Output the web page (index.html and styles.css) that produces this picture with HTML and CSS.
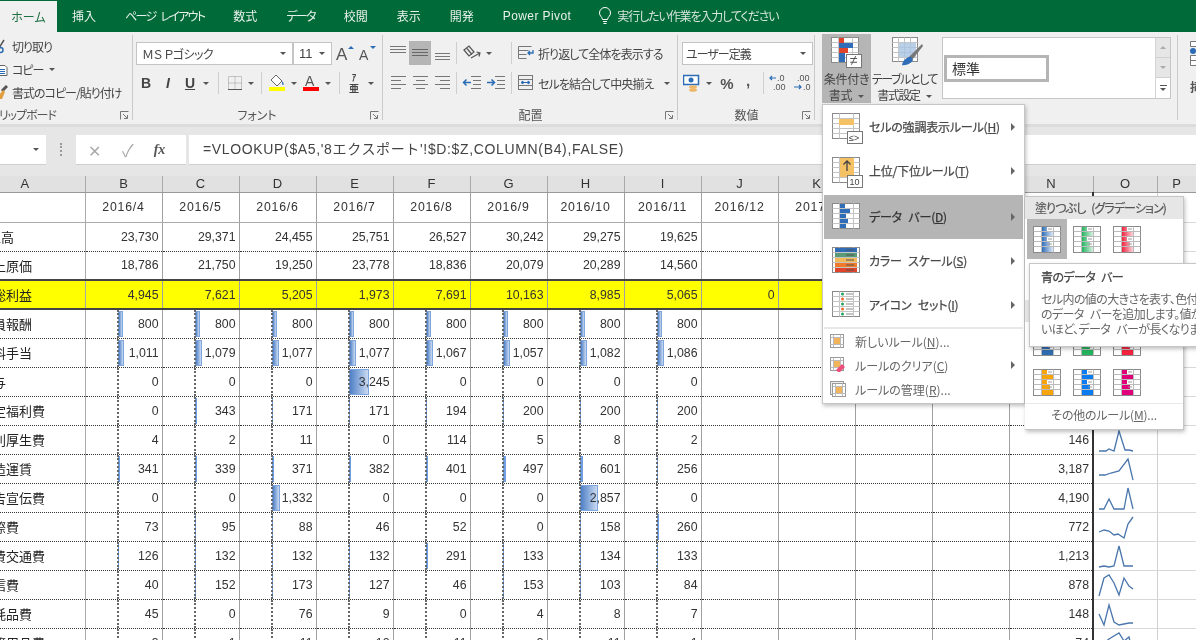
FILE: index.html
```html
<!DOCTYPE html>
<html lang="ja">
<head>
<meta charset="utf-8">
<title>Excel 条件付き書式</title>
<link rel="stylesheet" href="styles.css">
</head>
<body>
<svg class="defs" aria-hidden="true">
  <defs>
    <linearGradient id="gBlue"><stop offset="0" stop-color="#2f6db8"/><stop offset="1" stop-color="#dbe7f6"/></linearGradient>
    <linearGradient id="gGreen"><stop offset="0" stop-color="#22b35e"/><stop offset="1" stop-color="#d6f2e1"/></linearGradient>
    <linearGradient id="gRed"><stop offset="0" stop-color="#f0223e"/><stop offset="1" stop-color="#fcd5da"/></linearGradient>
    <symbol id="al-top" viewBox="0 0 20 20"><path d="M2 3.5h16M2 6.5h16M2 9.5h16" stroke="#777" fill="none"/></symbol>
    <symbol id="al-mid" viewBox="0 0 20 20"><path d="M2 6.5h16M2 9.5h16M2 12.5h16" stroke="#666" fill="none"/></symbol>
    <symbol id="al-bot" viewBox="0 0 20 20"><path d="M3 10.5h15M3 13.5h15M3 16.5h15" stroke="#777" fill="none"/></symbol>
    <symbol id="al-l" viewBox="0 0 20 20"><path d="M3 3.5h15M3 7.5h10M3 11.5h15M3 15.5h10" stroke="#777" fill="none"/></symbol>
    <symbol id="al-c" viewBox="0 0 20 20"><path d="M3 3.5h15M6 7.5h9M3 11.5h15M6 15.5h9" stroke="#777" fill="none"/></symbol>
    <symbol id="al-r" viewBox="0 0 20 20"><path d="M3 3.5h15M8 7.5h10M3 11.5h15M8 15.5h10" stroke="#777" fill="none"/></symbol>
    <symbol id="in-l" viewBox="0 0 20 20"><path d="M9 3.5h10M11 7.5h8M11 11.5h8M9 15.5h10" stroke="#777" fill="none"/><path d="M1 9.5h8M4.500 6.500l-3 3 3 3" stroke="#2b6cb5" stroke-width="1.500" fill="none"/></symbol>
    <symbol id="in-r" viewBox="0 0 20 20"><path d="M9 3.5h10M11 7.500h8M11 11.500h8M9 15.5h10" stroke="#777" fill="none"/><path d="M1 9.500h8M5.500 6.500l3 3-3 3" stroke="#2b6cb5" stroke-width="1.500" fill="none"/></symbol>
    <symbol id="launcher" viewBox="0 0 9 9"><path d="M.5 8.500v-8h8M3 3l4 4M4 7.500h3.500V4" fill="none" stroke="#777"/></symbol>
    <symbol id="grid-sm" viewBox="0 0 14 14"><rect x=".5" y=".5" width="13" height="13" fill="#fff" stroke="#999"/><path d="M.5 3.500h13M.5 10.500h13M3.500 .5v13M10.500 .5v13" stroke="#bbb" fill="none"/><rect x="4" y="4" width="6" height="6" fill="#f2b45a"/></symbol>
    <symbol id="tbl" viewBox="0 0 32 32"><rect x=".5" y=".5" width="27" height="25" fill="#fff" stroke="#8a8a8a"/><path d="M.5 5.500h27M.5 10.500h27M.5 15.500h27M.5 20.500h27M7.500 .5v25M21.500 .5v25" stroke="#c4c4c4" fill="none"/></symbol>
    <symbol id="gal" viewBox="0 0 28 27"><rect x=".5" y=".5" width="27" height="26" fill="#fff" stroke="#8a8a8a"/><path d="M.5 5.500h27M.5 10.500h27M.5 15.500h27M.5 20.500h27M8.500 .5v26M20.500 .5v26" stroke="#bbb" fill="none"/><path d="M9 1h5v4H9zM9 6h11v4H9zM9 11h5v4H9zM9 16h8v4H9zM9 21h11v5H9z" stroke="none"/><path d="M15 3h4M15 13h4M15 18h4" stroke="#999" fill="none"/></symbol>
  </defs>
</svg>
<div class="app">
  <nav class="tabs">
    <span class="tab home">ホーム</span>
    <span class="tab">挿入</span>
    <span class="tab kana">ページ レイアウト</span>
    <span class="tab">数式</span>
    <span class="tab kana">データ</span>
    <span class="tab">校閲</span>
    <span class="tab">表示</span>
    <span class="tab">開発</span>
    <span class="tab latin">Power Pivot</span>
    <span class="tab tell">
      <svg width="14" height="18" viewBox="0 0 14 18"><path d="M4.500 12.500C4 9.500 1.500 9 1.500 6a5.500 5.500 0 0 1 11 0c0 3-2.500 3.500-3 6.500zM5 14.500h4M5.500 16.500h3" fill="none" stroke="#fff"/></svg>
      <span>実行したい作業を入力してください</span>
    </span>
  </nav>

  <section class="ribbon">
    <div class="group clip">
      <div class="clip-list">
        <div class="clip-row">
          <svg class="clip-ic" width="12" height="16" viewBox="0 0 12 16"><path d="M8 1 3 9M0 3l5 6" stroke="#555" stroke-width="1.500" fill="none"/><circle cx="4.500" cy="11" r="2.500" fill="none" stroke="#2b6cb5" stroke-width="1.500"/></svg>
          <span>切り取り</span>
        </div>
        <div class="clip-row">
          <svg class="clip-ic" width="12" height="16" viewBox="0 0 12 16"><path d="M1 3.500h8l2 2v8H1z" fill="#fff" stroke="#666"/><path d="M3 7.500h6M3 9.500h6M3 11.500h6" stroke="#2b6cb5"/></svg>
          <span>コピー</span><i class="caret gapped"></i>
        </div>
        <div class="clip-row">
          <svg class="clip-ic" width="12" height="16" viewBox="0 0 12 16"><path d="M11 1 6 6" stroke="#555" stroke-width="3"/><path d="M0 14 7 5l2 2-3 7z" fill="#e0a040"/></svg>
          <span>書式のコピー/貼り付け</span>
        </div>
      </div>
      <div class="label label-clip"><span>クリップボード</span><svg class="launch" width="9" height="9"><use href="#launcher"/></svg></div>
    </div>

    <div class="group font">
      <div class="rows">
        <div class="row font-r1">
          <span class="select sel-font"><span>ＭＳ Ｐゴシック</span><i class="caret"></i></span>
          <span class="select sel-size"><span>11</span><i class="caret"></i></span>
          <svg class="ic" width="22" height="22" viewBox="0 0 22 22"><text x="3" y="18" class="glyph big">A</text><path d="M15 7l3-3 3 3z" fill="#2b6cb5"/></svg>
          <svg class="ic" width="22" height="22" viewBox="0 0 22 22"><text x="4" y="18" class="glyph mid">A</text><path d="M15 4l3 3 3-3z" fill="#2b6cb5"/></svg>
        </div>
        <div class="row font-r2">
          <b class="btn-txt">B</b>
          <em class="btn-txt">I</em>
          <u class="btn-txt">U</u>
          <i class="caret"></i>
          <span class="sep"></span>
          <svg class="ic" width="20" height="20" viewBox="0 0 20 20"><path d="M3.500 3.500h13v13h-13zM10 3.500v13M3.500 10h13" fill="none" stroke="#999" stroke-dasharray="1 1"/><path d="M3 16.500h14" stroke="#555"/></svg>
          <i class="caret"></i>
          <span class="sep"></span>
          <svg class="ic" width="20" height="22" viewBox="0 0 20 22"><path d="M9 3l6 6-5 5-6-6z" fill="#fff" stroke="#666"/><path d="M15 9c2 2 2 4 1 4s-1-2-1-4z" fill="#2b6cb5"/><path d="M2 17h16" stroke="#ff0" stroke-width="4"/></svg>
          <i class="caret"></i>
          <svg class="ic" width="20" height="22" viewBox="0 0 20 22"><text x="4" y="14" class="glyph mid">A</text><path d="M2 17h16" stroke="#f00" stroke-width="4"/></svg>
          <i class="caret"></i>
          <span class="sep"></span>
          <span class="furi"><small>ｱ</small>亜</span>
          <i class="caret"></i>
        </div>
      </div>
      <div class="label"><span></span><span>フォント</span><svg class="launch" width="9" height="9"><use href="#launcher"/></svg></div>
    </div>

    <div class="group align">
      <div class="rows">
        <div class="row al-r1">
          <svg class="ic" width="20" height="20"><use href="#al-top"/></svg>
          <span class="ic-on"><svg width="20" height="20"><use href="#al-mid"/></svg></span>
          <svg class="ic" width="20" height="20"><use href="#al-bot"/></svg>
          <span class="sep"></span>
          <svg class="ic" width="20" height="20" viewBox="0 0 20 20"><path d="M2 7l5-4 5 6-5 4zM5 5.500l5 6" stroke="#555" stroke-width="1.200" fill="none"/><path d="M9 15l9-5M14.500 9l3.500 1-1 3.500" stroke="#555" stroke-width="1.200" fill="none"/></svg>
          <i class="caret"></i>
          <span class="sep sep-end"></span>
          <span class="wide"><svg width="16" height="18" viewBox="0 0 16 18"><path d="M.5 2.500h13M.5 6.500h10M.5 10.500h8M.5 14.500h8" stroke="#777" fill="none"/><path d="M.5 2.500v12" stroke="#777"/><path d="M15 6v3h-5M12 7l-2 2 2 2" stroke="#2b6cb5" stroke-width="1.300" fill="none"/></svg><span>折り返して全体を表示する</span></span>
        </div>
        <div class="row al-r2">
          <svg class="ic" width="20" height="20"><use href="#al-l"/></svg>
          <svg class="ic" width="20" height="20"><use href="#al-c"/></svg>
          <svg class="ic" width="20" height="20"><use href="#al-r"/></svg>
          <span class="sep"></span>
          <svg class="ic" width="20" height="20"><use href="#in-l"/></svg>
          <svg class="ic" width="20" height="20"><use href="#in-r"/></svg>
          <span class="sep sep-end"></span>
          <span class="wide"><svg width="16" height="18" viewBox="0 0 16 18"><rect x=".5" y="1.500" width="14" height="14" fill="none" stroke="#777"/><path d="M.5 5.500h14M.5 11.500h14" stroke="#777"/><path d="M3 8.500h9M3 8.500l2-1.500v3zM12 8.500l-2-1.500v3z" stroke="#2b6cb5" fill="#2b6cb5"/></svg><span>セルを結合して中央揃え</span><i class="caret gapped"></i></span>
        </div>
      </div>
      <div class="label"><span></span><span>配置</span><svg class="launch" width="9" height="9"><use href="#launcher"/></svg></div>
    </div>

    <div class="group number">
      <div class="rows">
        <div class="row num-r1"><span class="select sel-num"><span>ユーザー定義</span><i class="caret"></i></span></div>
        <div class="row num-r2">
          <svg class="ic" width="18" height="20" viewBox="0 0 18 20"><rect x=".5" y="2.500" width="15" height="9" fill="#fff" stroke="#2b6cb5" stroke-width="1.500"/><circle cx="8" cy="7" r="2.500" fill="#2b6cb5"/><ellipse cx="10" cy="14" rx="4" ry="1.800" fill="#eeb765"/><ellipse cx="10" cy="17" rx="4" ry="1.800" fill="#eeb765"/></svg>
          <i class="caret"></i>
          <span class="pct">%</span>
          <b class="comma">,</b>
          <span class="sep"></span>
          <svg class="ic" width="20" height="20" viewBox="0 0 20 20"><text x="8" y="8" class="glyph tiny">.0</text><text x="4" y="17" class="glyph tiny">.00</text><path d="M1 5h6M3 3L1 5l2 2" stroke="#2b6cb5" stroke-width="1.200" fill="none"/></svg>
          <svg class="ic" width="20" height="20" viewBox="0 0 20 20"><text x="5" y="8" class="glyph tiny">.00</text><text x="11" y="17" class="glyph tiny">.0</text><path d="M2 14h7M7 12l2 2-2 2" stroke="#2b6cb5" stroke-width="1.200" fill="none"/></svg>
        </div>
      </div>
      <div class="label"><span></span><span>数値</span><svg class="launch" width="9" height="9"><use href="#launcher"/></svg></div>
    </div>

    <div class="group styles">
      <div class="bigbtn active">
        <svg width="32" height="32" viewBox="0 0 32 32"><use href="#tbl"/><path d="M8 1h5v5H8zM8 11h9v5H8z" fill="#e0452c"/><path d="M8 6h14v5H8zM8 16h6v9H8z" fill="#2f6db8"/><rect x="15.500" y="17.500" width="15" height="13" fill="#fff" stroke="#777"/><text x="19" y="28" class="glyph mid">≠</text></svg>
        <span>条件付き<br>書式<i class="caret gapped"></i></span>
      </div>
      <div class="bigbtn tblbtn">
        <svg width="32" height="32" viewBox="0 0 32 32"><rect x=".5" y=".5" width="25" height="24" fill="#fff" stroke="#8a8a8a"/><path d="M.5 5.500h25M.5 10.500h25M.5 15.500h25M.5 20.500h25M6.500 .5v24M12.500 .5v24M18.500 .5v24" stroke="#c4c4c4" fill="none"/><path d="M7 6h17v14H7z" fill="#a9c4e4" opacity=".8"/><path d="M30 7 17 20l3 3 11-14z" fill="#777"/><path d="M19 20c-3-1-8 3-9 8 4 1 10-2 11-5z" fill="#2f6db8"/></svg>
        <span>テーブルとして<br>書式設定<i class="caret gapped"></i></span>
      </div>
      <div class="gallery">
        <div class="gal-list"><div class="gal-cell">標準</div></div>
        <div class="gal-scroll">
          <span class="off"><i class="caret up"></i></span>
          <span class="off"><i class="caret"></i></span>
          <span class="more"><i class="bar-mark"></i><i class="caret"></i></span>
        </div>
      </div>
    </div>

    <div class="group cells">
      <svg width="8" height="28" viewBox="0 0 8 28"><path d="M.5 1.500h8v5h-8zM.5 15.500h8v10h-8zM.5 20.500h8" fill="#fff" stroke="#777"/><circle cx="3" cy="11" r="3" fill="#2b6cb5"/></svg>
      <span>挿入</span>
    </div>
  </section>

  <div class="formula">
    <div class="namebox"><i class="caret"></i></div>
    <div class="grip"></div>
    <div class="fxbox">
      <span class="fx-cancel">✕</span>
      <span class="fx-ok">✓</span>
      <span class="fx-fn">fx</span>
    </div>
    <div class="fxinput">=VLOOKUP($A5,'8エクスポート'!$D:$Z,COLUMN(B4),FALSE)</div>
  </div>

  <div class="sheet">
    <table class="grid">
      <colgroup>
        <col class="c-a"><col class="c-m"><col class="c-m"><col class="c-m"><col class="c-m"><col class="c-m"><col class="c-m"><col class="c-m"><col class="c-m"><col class="c-m"><col class="c-m"><col class="c-m"><col class="c-m"><col class="c-n"><col class="c-o"><col class="c-p">
      </colgroup>
      <thead>
        <tr><th class="th-a">A</th><th>B</th><th>C</th><th>D</th><th>E</th><th>F</th><th>G</th><th>H</th><th>I</th><th>J</th><th>K</th><th>L</th><th>M</th><th>N</th><th>O</th><th>P</th></tr>
      </thead>
      <tbody>
        <tr class="dates"><td class="a"></td><td>2016/4</td><td>2016/5</td><td>2016/6</td><td>2016/7</td><td>2016/8</td><td>2016/9</td><td>2016/10</td><td>2016/11</td><td>2016/12</td><td>2017/1</td><td>2017/2</td><td>2017/3</td><td></td><td class="o"></td><td class="p"></td></tr>
        <tr><td class="a short">売上高</td><td>23,730</td><td>29,371</td><td>24,455</td><td>25,751</td><td>26,527</td><td>30,242</td><td>29,275</td><td>19,625</td><td></td><td></td><td></td><td></td><td></td><td class="o"></td><td class="p"></td></tr>
        <tr class="after"><td class="a">売上原価</td><td>18,786</td><td>21,750</td><td>19,250</td><td>23,778</td><td>18,836</td><td>20,079</td><td>20,289</td><td>14,560</td><td></td><td></td><td></td><td></td><td></td><td class="o"></td><td class="p"></td></tr>
        <tr class="total"><td class="a long">売上総利益</td><td>4,945</td><td>7,621</td><td>5,205</td><td>1,973</td><td>7,691</td><td>10,163</td><td>8,985</td><td>5,065</td><td>0</td><td></td><td></td><td></td><td></td><td class="o"></td><td class="p"></td></tr>
        <tr class="bars"><td class="a">役員報酬</td><td><i class="bar" style="width:5px"></i>800</td><td><i class="bar" style="width:5px"></i>800</td><td><i class="bar" style="width:5px"></i>800</td><td><i class="bar" style="width:5px"></i>800</td><td><i class="bar" style="width:5px"></i>800</td><td><i class="bar" style="width:5px"></i>800</td><td><i class="bar" style="width:5px"></i>800</td><td><i class="bar" style="width:5px"></i>800</td><td></td><td></td><td></td><td></td><td></td><td class="o"></td><td class="p"></td></tr>
        <tr class="bars"><td class="a">給料手当</td><td><i class="bar" style="width:6px"></i>1,011</td><td><i class="bar" style="width:7px"></i>1,079</td><td><i class="bar" style="width:7px"></i>1,077</td><td><i class="bar" style="width:7px"></i>1,077</td><td><i class="bar" style="width:7px"></i>1,067</td><td><i class="bar" style="width:7px"></i>1,057</td><td><i class="bar" style="width:7px"></i>1,082</td><td><i class="bar" style="width:7px"></i>1,086</td><td></td><td></td><td></td><td></td><td></td><td class="o"></td><td class="p"></td></tr>
        <tr class="bars"><td class="a">賞与</td><td>0</td><td>0</td><td>0</td><td><i class="bar" style="width:20px"></i>3,245</td><td>0</td><td>0</td><td>0</td><td>0</td><td></td><td></td><td></td><td></td><td></td><td class="o"></td><td class="p"></td></tr>
        <tr class="bars"><td class="a">法定福利費</td><td>0</td><td><i class="bar thin" style="width:2px"></i>343</td><td><i class="bar thin" style="width:1px"></i>171</td><td><i class="bar thin" style="width:1px"></i>171</td><td><i class="bar thin" style="width:1px"></i>194</td><td><i class="bar thin" style="width:1px"></i>200</td><td><i class="bar thin" style="width:1px"></i>200</td><td><i class="bar thin" style="width:1px"></i>200</td><td></td><td></td><td></td><td></td><td></td><td class="o"></td><td class="p"></td></tr>
        <tr class="bars"><td class="a">福利厚生費</td><td>4</td><td>2</td><td>11</td><td>0</td><td>114</td><td>5</td><td>8</td><td>2</td><td></td><td></td><td></td><td></td><td>146</td><td class="o"><svg class="spark" viewBox="0 0 64 29"><polyline points="5,25 12,25 15,23 20,25 25,5 31,24 35,24 39,25"/></svg></td><td class="p"></td></tr>
        <tr class="bars"><td class="a">荷造運賃</td><td><i class="bar thin" style="width:2px"></i>341</td><td><i class="bar thin" style="width:2px"></i>339</td><td><i class="bar thin" style="width:2px"></i>371</td><td><i class="bar thin" style="width:2px"></i>382</td><td><i class="bar thin" style="width:2px"></i>401</td><td><i class="bar thin" style="width:3px"></i>497</td><td><i class="bar thin" style="width:3px"></i>601</td><td><i class="bar thin" style="width:1px"></i>256</td><td></td><td></td><td></td><td></td><td>3,187</td><td class="o"><svg class="spark" viewBox="0 0 64 29"><polyline points="5,20 11,20 17,18 25,16 34,4 39,25"/></svg></td><td class="p"></td></tr>
        <tr class="bars"><td class="a">広告宣伝費</td><td>0</td><td>0</td><td><i class="bar" style="width:8px"></i>1,332</td><td>0</td><td>0</td><td>0</td><td><i class="bar" style="width:18px"></i>2,857</td><td>0</td><td></td><td></td><td></td><td></td><td>4,190</td><td class="o"><svg class="spark" viewBox="0 0 64 29"><polyline points="5,25 10,25 15,15 20,25 30,25 34,4 39,25"/></svg></td><td class="p"></td></tr>
        <tr class="bars"><td class="a">交際費</td><td>73</td><td><i class="bar thin" style="width:1px"></i>95</td><td><i class="bar thin" style="width:1px"></i>88</td><td>46</td><td>52</td><td>0</td><td><i class="bar thin" style="width:1px"></i>158</td><td><i class="bar thin" style="width:2px"></i>260</td><td></td><td></td><td></td><td></td><td>772</td><td class="o"><svg class="spark" viewBox="0 0 64 29"><polyline points="5,19 10,17 15,18 20,22 24,21 30,25 34,11 39,4"/></svg></td><td class="p"></td></tr>
        <tr class="bars"><td class="a">旅費交通費</td><td><i class="bar thin" style="width:1px"></i>126</td><td><i class="bar thin" style="width:1px"></i>132</td><td><i class="bar thin" style="width:1px"></i>132</td><td><i class="bar thin" style="width:1px"></i>132</td><td><i class="bar thin" style="width:2px"></i>291</td><td><i class="bar thin" style="width:1px"></i>133</td><td><i class="bar thin" style="width:1px"></i>134</td><td><i class="bar thin" style="width:1px"></i>133</td><td></td><td></td><td></td><td></td><td>1,213</td><td class="o"><svg class="spark" viewBox="0 0 64 29"><polyline points="5,25 10,24 15,25 20,24 25,4 30,24 39,24"/></svg></td><td class="p"></td></tr>
        <tr class="bars"><td class="a">通信費</td><td>40</td><td><i class="bar thin" style="width:1px"></i>152</td><td><i class="bar thin" style="width:1px"></i>173</td><td><i class="bar thin" style="width:1px"></i>127</td><td>46</td><td><i class="bar thin" style="width:1px"></i>153</td><td><i class="bar thin" style="width:1px"></i>103</td><td>84</td><td></td><td></td><td></td><td></td><td>878</td><td class="o"><svg class="spark" viewBox="0 0 64 29"><polyline points="5,25 10,7 15,4 20,12 25,24 30,7 35,15 39,18"/></svg></td><td class="p"></td></tr>
        <tr class="bars"><td class="a">消耗品費</td><td>45</td><td>0</td><td>76</td><td>9</td><td>0</td><td>4</td><td>8</td><td>7</td><td></td><td></td><td></td><td></td><td>148</td><td class="o"><svg class="spark" viewBox="0 0 64 29"><polyline points="5,14 10,25 15,5 20,22 25,25 35,23 39,23"/></svg></td><td class="p"></td></tr>
        <tr class="bars"><td class="a">事務用品費</td><td>3</td><td>1</td><td>11</td><td>12</td><td>11</td><td>3</td><td>11</td><td>1</td><td></td><td></td><td></td><td></td><td>74</td><td class="o"><svg class="spark" viewBox="0 0 64 29"><polyline points="5,25 10,14 15,10 25,4 30,12 35,8 39,25"/></svg></td><td class="p"></td></tr>
      </tbody>
    </table>
  </div>

  <div class="menu">
    <div class="item">
      <svg width="32" height="32" viewBox="0 0 32 32"><use href="#tbl"/><rect x="7" y="6" width="15" height="6" fill="#f4c264"/><rect x="15.500" y="18.500" width="15" height="12" fill="#fff" stroke="#777"/><text x="17" y="28" class="glyph badge">≤&gt;</text></svg>
      <span class="item-text">セルの強調表示ルール(<u>H</u>)</span><i class="arrow"></i>
    </div>
    <div class="item">
      <svg width="32" height="32" viewBox="0 0 32 32"><use href="#tbl"/><rect x="8" y="1" width="14" height="19" fill="#f4c264"/><path d="M15 14V4M11.500 7.500 15 4l3.500 3.500" stroke="#444" stroke-width="1.300" fill="none"/><rect x="15.500" y="18.500" width="15" height="12" fill="#fff" stroke="#777"/><text x="17.500" y="28" class="glyph badge">10</text></svg>
      <span class="item-text">上位/下位ルール(<u>T</u>)</span><i class="arrow"></i>
    </div>
    <div class="item on">
      <svg width="32" height="32" viewBox="0 0 32 32"><use href="#tbl"/><path d="M8 1h5v4H8zM8 6h10v4H8zM8 11h6v4H8zM8 16h8v4H8zM8 21h6v4H8z" fill="#2f6db8"/></svg>
      <span class="item-text">データ バー(<u>D</u>)</span><i class="arrow"></i>
    </div>
    <div class="item">
      <svg width="32" height="32" viewBox="0 0 32 32"><use href="#tbl"/><path d="M3 1h22v4H3z" fill="#2f6db8"/><path d="M3 6h22v4H3z" fill="#5b9a78"/><path d="M3 11h22v4H3z" fill="#f2b95a"/><path d="M3 16h22v4H3z" fill="#ef7a2a"/><path d="M3 21h22v4H3z" fill="#e0452c"/><path d="M14 3h8M14 8h8M14 13h8M14 18h8M14 23h8" stroke="#555"/></svg>
      <span class="item-text">カラー スケール(<u>S</u>)</span><i class="arrow"></i>
    </div>
    <div class="item">
      <svg width="32" height="32" viewBox="0 0 32 32"><use href="#tbl"/><path d="M14 3h7M14 8h7M14 13h7M14 18h7M14 23h7" stroke="#888"/><circle cx="10.500" cy="3" r="1.500" fill="#22a35e"/><circle cx="10.500" cy="8" r="1.500" fill="#ef6a2a"/><circle cx="10.500" cy="13" r="1.500" fill="#22a35e"/><circle cx="10.500" cy="18" r="1.500" fill="#ef6a2a"/><circle cx="10.500" cy="23" r="1.500" fill="#22a35e"/></svg>
      <span class="item-text">アイコン セット(<u>I</u>)</span><i class="arrow"></i>
    </div>
    <div class="menu-sep"></div>
    <div class="small"><svg width="14" height="14"><use href="#grid-sm"/></svg><span>新しいルール(<u>N</u>)...</span></div>
    <div class="small"><svg width="16" height="16" viewBox="0 0 16 16"><use href="#grid-sm" width="14" height="14"/><path d="M6 13l6-6 3 3-5 5H8z" fill="#ee4f7a"/></svg><span>ルールのクリア(<u>C</u>)</span><i class="arrow"></i></div>
    <div class="small"><svg width="16" height="16" viewBox="0 0 16 16"><rect x=".5" y=".5" width="13" height="13" fill="#eee" stroke="#999"/><use href="#grid-sm" x="2" y="2" width="14" height="14"/></svg><span>ルールの管理(<u>R</u>)...</span></div>
  </div>

  <div class="submenu">
    <div class="sub-head">塗りつぶし (グラデーション)</div>
    <div class="gal-grid">
      <span class="g-cell sel"><svg width="28" height="27"><use href="#gal" fill="url(#gBlue)"/></svg></span>
      <span class="g-cell"><svg width="28" height="27"><use href="#gal" fill="url(#gGreen)"/></svg></span>
      <span class="g-cell"><svg width="28" height="27"><use href="#gal" fill="url(#gRed)"/></svg></span>
    </div>
    <div class="sub-head second">塗りつぶし (単色)</div>
    <div class="gal-grid">
      <span class="g-cell"><svg width="28" height="27"><use href="#gal" fill="#2f6db0"/></svg></span>
      <span class="g-cell"><svg width="28" height="27"><use href="#gal" fill="#24b35f"/></svg></span>
      <span class="g-cell"><svg width="28" height="27"><use href="#gal" fill="#f3233f"/></svg></span>
      <span class="g-cell"><svg width="28" height="27"><use href="#gal" fill="#f7a50a"/></svg></span>
      <span class="g-cell"><svg width="28" height="27"><use href="#gal" fill="#0a7bf0"/></svg></span>
      <span class="g-cell"><svg width="28" height="27"><use href="#gal" fill="#e0007a"/></svg></span>
    </div>
    <div class="sub-more">その他のルール(<u>M</u>)...</div>
  </div>

  <div class="tip">
    <h4>青のデータ バー</h4>
    <p>セル内の値の大きさを表す、色付き</p>
    <p>のデータ バーを追加します。値が大き</p>
    <p>いほど、データ バーが長くなります。</p>
  </div>
</div>
</body>
</html>
```

FILE: styles.css
```css
* { box-sizing: border-box; }
html, body { margin: 0; height: 100%; }
body {
  overflow: hidden;
  background: #fff;
  color: #444;
  font: 12px "Noto Sans CJK JP", "Liberation Sans", sans-serif;
  font-feature-settings: "palt";
}
.defs { position: absolute; width: 0; height: 0; }
.app { position: relative; width: 1196px; height: 640px; overflow: hidden; filter: blur(.35px); }

/* tabs */
.tabs {
  display: flex;
  align-items: center;
  gap: 29px;
  height: 32px;
  background: #006a38;
  color: #e8f2ec;
}
.tab { white-space: nowrap; line-height: 32px; }
.home {
  align-self: flex-end;
  width: 57px;
  height: 31px;
  margin-right: -14px;
  line-height: 31px;
  text-align: center;
  background: #f0f0f0;
  color: #1e7145;
}
.kana { letter-spacing: -1.7px; word-spacing: 4px; }
.latin { font-family: "Liberation Sans", sans-serif; letter-spacing: .4px; }
.tell { display: flex; align-items: center; gap: 5px; margin-left: -2px; color: #d5e6dc; }
.tell span { letter-spacing: -1.1px; }

/* ribbon */
.ribbon {
  display: flex;
  height: 92px;
  background: #f0f0f0;
  white-space: nowrap;
}
.group {
  position: relative;
  display: flex;
  flex-direction: column;
  justify-content: space-between;
  margin: 3px 0 4px;
  border-right: 1px solid #c9c9c9;
}
.clip { width: 133px; overflow: hidden; }
.font { width: 250px; padding-left: 2px; }
.align { width: 295px; padding-left: 4px; }
.number { width: 137px; padding-left: 4px; }
.styles {
  flex-direction: row;
  justify-content: flex-start;
  width: 363px;
  padding-left: 7px;
}
.cells { flex: 1; border: 0; justify-content: flex-start; padding: 5px 0 0 12px; gap: 10px; overflow: hidden; }
.cells span { font-weight: 700; color: #555; }

.clip-row { display: flex; align-items: center; height: 23px; letter-spacing: -1px; }
.clip-ic { margin: 0 4px 0 -4px; }

.rows { display: flex; flex-direction: column; gap: 6px; padding-top: 6px; }
.row { display: grid; align-items: center; justify-items: center; height: 24px; }
.font-r1 { grid-template-columns: 157px 39px 23px 22px; padding-left: 1px; }
.font-r2 { grid-template-columns: 22px 22px 22px 10px 14px 20px 12px 9px 22px 12px 22px 12px 10px 20px 14px; }
.al-r1 { grid-template-columns: 22px 22px 22px 7px 24px 10px 18px 1fr; }
.al-r2 { grid-template-columns: 22px 22px 22px 7px 24px 24px 4px 1fr; }
.num-r1 { display: flex; }
.num-r2 { grid-template-columns: 20px 14px 22px 20px 10px 22px 24px; }

.select {
  display: flex;
  align-items: center;
  justify-content: space-between;
  width: 100%;
  height: 23px;
  padding: 0 6px 0 5px;
  background: #fff;
  border: 1px solid #c4c4c4;
  color: #444;
  font-size: 13px;
}
.sel-font span { font-size: 12px; letter-spacing: -.5px; }
.sel-size span { font-family: "Liberation Sans", sans-serif; }
.sel-num { width: 131px; padding-left: 3px; font-size: 12px; letter-spacing: -1px; }

.caret {
  display: inline-block;
  flex: none;
  width: 0;
  height: 0;
  border-left: 3px solid transparent;
  border-right: 3px solid transparent;
  border-top: 3px solid #555;
}
.caret.up { border-top: 0; border-bottom: 3px solid #aaa; }
.caret.gapped { margin-left: 6px; vertical-align: middle; }
.sep { width: 1px; height: 22px; background: #cfcfcf; }
.sep-end { justify-self: end; }
.btn-txt { font: bold 14px "Liberation Sans", sans-serif; color: #444; }
em.btn-txt { font-style: italic; }
.furi { display: flex; flex-direction: column; align-items: center; font-size: 10px; font-weight: 700; line-height: 10px; }
.furi small { font-size: 9px; }
.ic-on { display: flex; align-items: center; justify-content: center; width: 22px; height: 24px; background: #b5b5b5; }
.glyph { font-family: "Liberation Sans", sans-serif; fill: #555; }
.glyph.big { font-size: 17px; }
.glyph.mid { font-size: 14px; }
.glyph.tiny { font-size: 9px; }
.glyph.badge { font-size: 9px; fill: #444; }
.pct, .comma { font: bold 15px "Liberation Sans", sans-serif; color: #555; }
.comma { margin-top: -6px; }
.wide { display: flex; align-items: center; gap: 4px; justify-self: start; margin-left: 6px; letter-spacing: -.9px; }

.label {
  display: grid;
  grid-template-columns: 1fr auto 1fr;
  align-items: center;
  height: 10px;
  padding-right: 3px;
  line-height: 10px;
  color: #555;
}
.label-clip {
  grid-template-columns: 1fr auto;
  margin-left: -11px;
  letter-spacing: -1px;
}
.launch { justify-self: end; }

/* styles group */
.bigbtn {
  display: flex;
  flex-direction: column;
  align-items: center;
  width: 49px;
  height: 69px;
  margin-top: -1px;
  padding-top: 3px;
  line-height: 16px;
  text-align: center;
  letter-spacing: -.3px;
  color: #444;
}
.bigbtn svg { flex: none; }
.bigbtn span { margin-top: 2px; white-space: nowrap; }
.bigbtn.active { background: #b5b5b5; }
.tblbtn { width: 67px; letter-spacing: -1.4px; }
.tblbtn svg { margin-left: 6px; }
.gallery {
  display: flex;
  width: 229px;
  height: 62px;
  margin: 2px 0 0 4px;
  background: #fff;
  border: 1px solid #c6c6c6;
}
.gal-list { flex: 1; padding-top: 17px; }
.gal-cell {
  width: 105px;
  height: 27px;
  margin-left: 1px;
  padding-left: 5px;
  line-height: 20px;
  border: 3px solid #b5b5b5;
  font-size: 14px;
  color: #333;
}
.gal-scroll { display: flex; flex-direction: column; width: 15px; }
.gal-scroll span { display: flex; flex-direction: column; align-items: center; justify-content: center; height: 20px; border-left: 1px solid #d5d5d5; }
.gal-scroll .off { background: #e6e6e6; border-bottom: 1px solid #d0d0d0; }
.gal-scroll .off .caret { border-top-color: #aaa; }
.gal-scroll .off .caret.up { border-bottom-color: #aaa; border-top-color: transparent; }
.bar-mark { width: 7px; height: 1px; margin-bottom: 2px; background: #555; }

/* formula bar */
.formula {
  display: flex;
  align-items: stretch;
  height: 41px;
  padding-top: 8px;
  background: #e6e6e6;
  border-top: 3px solid #dcdcdc;
}
.namebox {
  display: flex;
  align-items: center;
  justify-content: flex-end;
  width: 46px;
  padding-right: 7px;
  background: #fff;
  border-bottom: 1px solid #cfcfcf;
}
.grip {
  width: 2px;
  height: 13px;
  margin: 8px 14px 0;
  border-left: 2px dotted #999;
}
.fxbox {
  display: flex;
  align-items: center;
  width: 110px;
  background: #fff;
  border-bottom: 1px solid #cfcfcf;
  color: #aaa;
  font-size: 16px;
}
.fx-cancel { margin-left: 12px; }
.fx-ok { margin-left: 21px; font-size: 17px; }
.fx-fn { margin-left: 20px; font: italic bold 14px "Liberation Serif", serif; color: #555; }
.fxinput {
  flex: 1;
  margin-left: 3px;
  padding-left: 14px;
  background: #fff;
  border-bottom: 1px solid #cfcfcf;
  font: 14px/29px "Liberation Sans", "Noto Sans CJK JP", sans-serif;
  color: #444;
  letter-spacing: .65px;
}

/* sheet */
.sheet { padding-top: 11px; background: #e6e6e6; }
.grid {
  border-collapse: collapse;
  table-layout: fixed;
  width: 1196px;
  background: #fff;
  font: 12.3px "Liberation Sans", sans-serif;
  color: #333;
}
.c-a { width: 85px; }
.c-m { width: 77px; }
.c-n { width: 84px; }
.c-o { width: 64px; }
.c-p { width: 39px; }
.grid th {
  height: 16px;
  padding: 0;
  background: #e1e1e1;
  border-right: 1px solid #aaa;
  border-bottom: 1px solid #999;
  font: 13px "Liberation Sans", sans-serif;
  color: #333;
}
.grid th.th-a { padding-right: 35px; }
.grid td {
  position: relative;
  isolation: isolate;
  height: 29px;
  padding: 0 3px 0 0;
  text-align: right;
  white-space: nowrap;
  border-right: 1px solid #a0a0a0;
  border-bottom: 1px dotted #333;
}
.grid .dates td {
  height: 30px;
  padding: 0;
  text-align: center;
  letter-spacing: .8px;
  border-bottom: 1px solid #aaa;
}
.grid td.a {
  overflow: hidden;
  padding: 0;
  text-align: left;
  text-indent: -20px;
  font: 13px "Noto Sans CJK JP", sans-serif;
  color: #222;
  border-right: 1px solid #aaa;
}
.grid td.short { text-indent: -25px; }
.grid td.long { text-indent: -33px; }
.grid .after td { border-bottom: 2px solid #444; }
.grid .total td { background: #ff0; border-bottom: 2px solid #444; border-top: 2px solid #444; }
.grid .bars td:nth-child(n+2):nth-child(-n+9)::before {
  content: "";
  position: absolute;
  top: 0;
  bottom: 0;
  left: 31px;
  border-left: 2px dotted #666;
}
.grid td:nth-child(14) { border-right: 2px solid #333; }
.grid td.o, .grid td.p { padding: 0; border-bottom: 1px solid #d8d8d8; background: #fff; }
.grid td.o { border-right: 1px solid #d0d0d0; }
.grid td.p { border-right: 0; }
.bar {
  position: absolute;
  z-index: -1;
  left: 32px;
  top: 1px;
  bottom: 1px;
  background: linear-gradient(90deg, #4f80c6, #c9daf2);
  border: 1px solid #7fa6de;
}
.bar.thin { background: #6f9fe0; border: 0; }
.spark { position: absolute; left: 0; top: 0; width: 64px; height: 29px; }
.spark polyline { fill: none; stroke: #4a76ac; stroke-width: 1.300; }

/* conditional-format menu */
.menu {
  position: absolute;
  left: 822px;
  top: 104px;
  width: 203px;
  height: 300px;
  padding: 0 1px;
  background: #fff;
  border: 1px solid #c6c6c6;
  box-shadow: 1px 2px 4px rgba(0, 0, 0, .25);
  color: #4a4a4a;
}
.item {
  position: relative;
  display: flex;
  align-items: center;
  height: 44px;
  padding-left: 8px;
  -webkit-text-stroke: .25px currentColor;
}
.item svg { flex: none; margin-top: 3px; }
.item-text { margin: -2px 0 0 5px; letter-spacing: -.2px; word-spacing: 4px; }
.item.on { margin-top: 2px; background: #b5b5b5; color: #333; }
.arrow {
  position: absolute;
  right: 8px;
  border-top: 4px solid transparent;
  border-bottom: 4px solid transparent;
  border-left: 4px solid #666;
}
.menu-sep { height: 2px; background: #e8e8e8; }
.small {
  position: relative;
  display: flex;
  align-items: center;
  height: 24px;
  padding-left: 6px;
  color: #666;
}
.small span { position: absolute; left: 31px; }

.submenu {
  position: absolute;
  left: 1025px;
  top: 196px;
  width: 159px;
  height: 234px;
  background: #fff;
  border: 1px solid #c6c6c6;
  border-left: 0;
  box-shadow: 1px 2px 4px rgba(0, 0, 0, .25);
}
.sub-head {
  height: 22px;
  padding-left: 10px;
  line-height: 22px;
  background: #e6e6e6;
  letter-spacing: -.9px;
  word-spacing: 4px;
  -webkit-text-stroke: .2px currentColor;
  color: #555;
}
.sub-head.second { margin-top: 41px; }
.gal-grid { display: grid; grid-template-columns: repeat(3, 40px); grid-auto-rows: 40px; padding-left: 2px; }
.g-cell { display: flex; align-items: center; justify-content: center; padding-top: 1px; }
.g-cell.sel { background: #b5b5b5; }
.sub-more {
  margin-top: 1px;
  height: 24px;
  line-height: 22px;
  text-align: center;
  letter-spacing: -.2px;
  border-top: 1px solid #e8e8e8;
  color: #666;
}

.tip {
  position: absolute;
  left: 1029px;
  top: 263px;
  width: 190px;
  height: 84px;
  padding: 5px 0 0 11px;
  background: #fff;
  border: 1px solid #c6c6c6;
  box-shadow: 1px 2px 4px rgba(0, 0, 0, .25);
  white-space: nowrap;
  letter-spacing: -.6px;
  word-spacing: 4px;
  color: #666;
}
.tip h4 { margin: 0 0 6px; font-size: 12px; font-weight: 400; line-height: 16px; -webkit-text-stroke: .25px currentColor; color: #444; }
.tip p { margin: 0; line-height: 15px; }
```
